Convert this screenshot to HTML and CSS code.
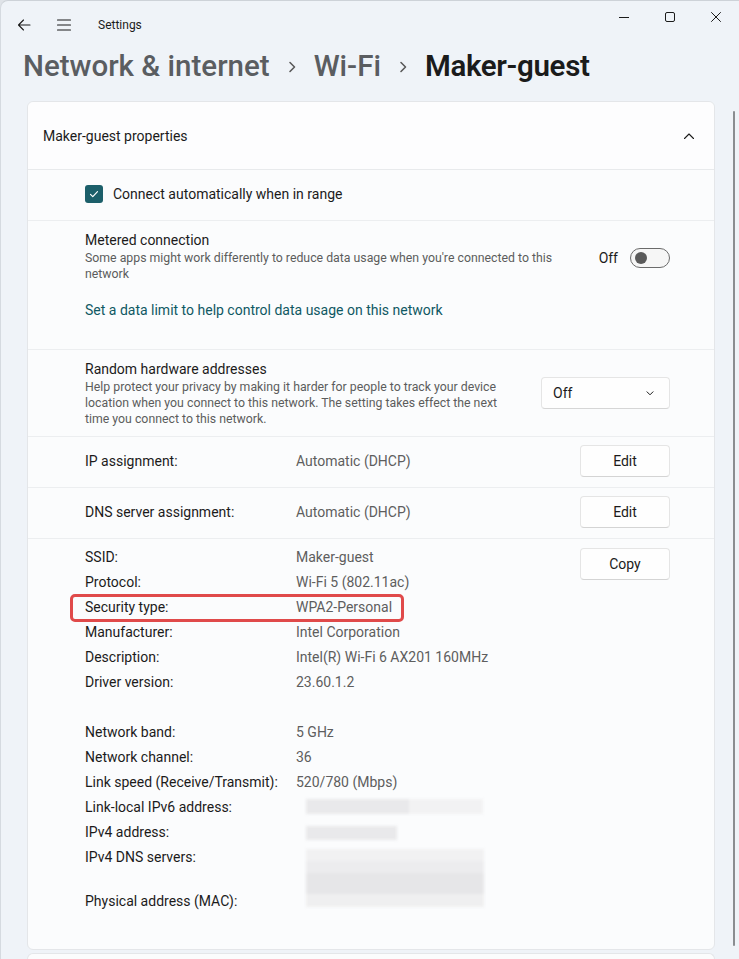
FILE: index.html
```html
<!DOCTYPE html>
<html>
<head>
<meta charset="utf-8">
<title>Settings</title>
<link rel="stylesheet" href="styles.css">
</head>
<body>
<div class="window">
  <header class="titlebar">
    <div class="tb-left">
      <span class="tb-icon"><svg width="16" height="16" viewBox="0 0 16 16"><path d="M14 8H2.5M7.5 3L2.5 8l5 5" fill="none" stroke="#1b1b1b" stroke-width="1.1" stroke-linecap="round" stroke-linejoin="round"/></svg></span>
      <span class="tb-icon"><svg width="16" height="16" viewBox="0 0 16 16"><path d="M1.5 3h13M1.5 8h13M1.5 13h13" fill="none" stroke="#1b1b1b" stroke-width="1.1" stroke-linecap="round"/></svg></span>
      <span class="app-title">Settings</span>
    </div>
    <div class="controls">
      <span class="ctl"><svg width="12" height="12" viewBox="0 0 12 12"><path d="M1 6.5h10" stroke="#1b1b1b" stroke-width="1"/></svg></span>
      <span class="ctl"><svg width="12" height="12" viewBox="0 0 12 12"><rect x="1.5" y="1.5" width="9" height="9" rx="1.5" fill="none" stroke="#1b1b1b" stroke-width="1"/></svg></span>
      <span class="ctl"><svg width="12" height="12" viewBox="0 0 12 12"><path d="M1.5 1.5l9 9M10.5 1.5l-9 9" stroke="#1b1b1b" stroke-width="1" stroke-linecap="round"/></svg></span>
    </div>
  </header>

  <h1 class="crumbs">
    <span class="crumb">Network &amp; internet</span>
    <svg class="sep" width="14" height="14" viewBox="0 0 14 14"><path d="M5 2.5l4.5 4.5L5 11.5" fill="none" stroke="#5a5a5a" stroke-width="1.6" stroke-linecap="round" stroke-linejoin="round"/></svg>
    <span class="crumb">Wi-Fi</span>
    <svg class="sep" width="14" height="14" viewBox="0 0 14 14"><path d="M5 2.5l4.5 4.5L5 11.5" fill="none" stroke="#5a5a5a" stroke-width="1.6" stroke-linecap="round" stroke-linejoin="round"/></svg>
    <span class="crumb current">Maker-guest</span>
  </h1>

  <main class="content">
    <section class="card">
      <div class="card-head">
        <span>Maker-guest properties</span>
        <svg width="14" height="14" viewBox="0 0 14 14"><path d="M2.5 9.5L7 5l4.5 4.5" fill="none" stroke="#1b1b1b" stroke-width="1.1" stroke-linecap="round" stroke-linejoin="round"/></svg>
      </div>

      <div class="row row-check">
        <span class="checkbox"><svg width="12" height="12" viewBox="0 0 12 12"><path d="M2.5 6.3l2.3 2.3 4.7-4.9" fill="none" stroke="#fff" stroke-width="1.2" stroke-linecap="round" stroke-linejoin="round"/></svg></span>
        <span>Connect automatically when in range</span>
      </div>

      <div class="row row-metered">
        <div class="setting">
          <div class="text">
            <div class="title">Metered connection</div>
            <div class="desc">Some apps might work differently to reduce data usage when you're connected to this network</div>
          </div>
          <div class="toggle-wrap">
            <span>Off</span>
            <span class="toggle"><span class="knob"></span></span>
          </div>
        </div>
        <a class="link">Set a data limit to help control data usage on this network</a>
      </div>

      <div class="row row-random">
        <div class="text">
          <div class="title">Random hardware addresses</div>
          <div class="desc narrow">Help protect your privacy by making it harder for people to track your device location when you connect to this network. The setting takes effect the next time you connect to this network.</div>
        </div>
        <div class="dropdown">
          <span>Off</span>
          <svg width="10" height="10" viewBox="0 0 10 10"><path d="M2 3.8L5 6.8l3-3" fill="none" stroke="#1b1b1b" stroke-width="1" stroke-linecap="round" stroke-linejoin="round"/></svg>
        </div>
      </div>

      <div class="row row-assign">
        <span class="label">IP assignment:</span>
        <span class="value">Automatic (DHCP)</span>
        <span class="btn">Edit</span>
      </div>

      <div class="row row-assign">
        <span class="label">DNS server assignment:</span>
        <span class="value">Automatic (DHCP)</span>
        <span class="btn">Edit</span>
      </div>

      <div class="row row-props">
        <div class="props">
          <div class="prop"><span class="label">SSID:</span><span class="value">Maker-guest</span></div>
          <div class="prop"><span class="label">Protocol:</span><span class="value">Wi-Fi 5 (802.11ac)</span></div>
          <div class="prop highlight"><span class="label">Security type:</span><span class="value">WPA2-Personal</span><span class="mark"></span></div>
          <div class="prop"><span class="label">Manufacturer:</span><span class="value">Intel Corporation</span></div>
          <div class="prop"><span class="label">Description:</span><span class="value">Intel(R) Wi-Fi 6 AX201 160MHz</span></div>
          <div class="prop"><span class="label">Driver version:</span><span class="value">23.60.1.2</span></div>
          <div class="prop"></div>
          <div class="prop"><span class="label">Network band:</span><span class="value">5 GHz</span></div>
          <div class="prop"><span class="label">Network channel:</span><span class="value">36</span></div>
          <div class="prop"><span class="label">Link speed (Receive/Transmit):</span><span class="value">520/780 (Mbps)</span></div>
          <div class="prop"><span class="label">Link-local IPv6 address:</span><span class="value"><span class="blur b-v6"></span></span></div>
          <div class="prop"><span class="label">IPv4 address:</span><span class="value"><span class="blur b-v4"></span></span></div>
          <div class="prop tall"><span class="label">IPv4 DNS servers:</span><span class="value"><span class="blur b-dns"></span></span></div>
          <div class="prop"><span class="label">Physical address (MAC):</span><span class="value"></span></div>
        </div>
        <span class="btn copy">Copy</span>
      </div>
    </section>
    <section class="card next"></section>
  </main>
  <div class="scrollbar"></div>
</div>
</body>
</html>
```

FILE: styles.css
```css
* { box-sizing: border-box; }
html, body { margin: 0; height: 100%; }
body {
  font-family: "Segoe UI", Roboto, "Noto Sans", sans-serif;
  color: #1b1b1b;
  background: #dfe3e8;
  overflow: hidden;
}
.window {
  position: relative;
  height: 959px;
  background: #eff3f8;
  border-top: 1px solid #cdd2d8;
  border-left: 1px solid #d5dae0;
  border-top-left-radius: 8px;
  overflow: hidden;
}
.titlebar {
  display: flex;
  justify-content: space-between;
  height: 47px;
}
.tb-left {
  display: flex;
  align-items: center;
  padding-left: 15px;
  gap: 24px;
}
.tb-icon { display: flex; width: 16px; height: 16px; }
.tb-icon + .app-title { margin-left: 2px; }
.app-title { font-size: 12px; margin-top: 1px; }
.controls { display: flex; height: 31px; }
.ctl {
  width: 46px;
  height: 31px;
  display: flex;
  align-items: center;
  justify-content: center;
}
.crumbs {
  margin: 0;
  padding-left: 22px;
  height: 36px;
  display: flex;
  align-items: center;
  gap: 15px;
  font-size: 29.5px;
  font-weight: 500;
  letter-spacing: 0;
  line-height: 36px;
}
.crumb { color: #5a5d61; }
.crumb.current { color: #1b1b1b; font-weight: 600; letter-spacing: -0.35px; }
.sep { margin: 2px 0 0; }
.content {
  padding: 17px 24px 0 26px;
  display: flex;
  flex-direction: column;
  gap: 3px;
}
.card {
  width: 688px;
  background: #fbfcfd;
  border: 1px solid #e4e6e9;
  border-radius: 6px;
  font-size: 14px;
}
.card-head {
  height: 68px;
  display: flex;
  align-items: center;
  justify-content: space-between;
  padding: 0 18px 0 15px;
  background: #fdfdfe;
  border-bottom: 1px solid #e8eaec;
  border-radius: 6px 6px 0 0;
}
.row {
  padding: 0 44px 0 57px;
  border-bottom: 1px solid #eceef0;
}
.row-check {
  height: 51px;
  display: flex;
  align-items: center;
  gap: 10px;
  padding-bottom: 2px;
}
.checkbox {
  width: 18px;
  height: 18px;
  border-radius: 3px;
  background: #1c5f6a;
  display: flex;
  align-items: center;
  justify-content: center;
}
.row-metered { height: 129px; padding-top: 10px; }
.setting { display: flex; justify-content: space-between; }
.text .title { line-height: 19px; }
.desc {
  font-size: 12.3px;
  color: #5c5c5c;
  line-height: 16px;
  max-width: 476px;
}
.desc.narrow { max-width: 428px; }
.toggle-wrap {
  display: flex;
  align-items: center;
  gap: 12px;
  margin-top: 16px;
  height: 22px;
}
.toggle {
  width: 40px;
  height: 20px;
  border: 1px solid #6b6b6b;
  border-radius: 10px;
  background: #f6f6f6;
  display: flex;
  align-items: center;
  padding-left: 4px;
}
.knob { width: 12px; height: 12px; border-radius: 50%; background: #5a5a5a; }
.link {
  display: block;
  margin-top: 18px;
  color: #0f5863;
  line-height: 20px;
}
.row-random {
  height: 87px;
  display: flex;
  justify-content: space-between;
  padding-top: 10px;
}
.dropdown {
  width: 129px;
  height: 32px;
  margin-top: 17px;
  background: #fefefe;
  border: 1px solid #e5e5e5;
  border-bottom-color: #d6d6d6;
  border-radius: 4px;
  display: flex;
  align-items: center;
  justify-content: space-between;
  padding: 0 14px 0 11px;
}
.row-assign {
  height: 51px;
  display: flex;
  align-items: center;
  padding-bottom: 2px;
}
.label { width: 211px; flex: none; }
.value { color: #5e5e5e; flex: 1; }
.btn {
  width: 90px;
  height: 32px;
  background: #fefefe;
  border: 1px solid #e5e5e5;
  border-bottom-color: #d4d4d4;
  border-radius: 4px;
  display: flex;
  align-items: center;
  justify-content: center;
  flex: none;
}
.row-props {
  border-bottom: none;
  display: flex;
  align-items: flex-start;
  padding-top: 6px;
  padding-bottom: 35px;
}
.props { flex: 1; }
.prop {
  position: relative;
  display: flex;
  height: 25px;
  line-height: 25px;
}
.prop.tall { height: 44px; }
.btn.copy { margin-top: 3px; }
.mark {
  position: absolute;
  left: -15px;
  top: -1px;
  width: 334px;
  height: 28px;
  border: 3px solid #e04a4a;
  border-radius: 5px;
}
.blur {
  display: block;
  position: relative;
  background: #e9e9eb;
  filter: blur(1.5px);
  margin-left: 10px;
}
.b-v6 { width: 177px; height: 15px; margin-top: 4px; background: linear-gradient(90deg, #e9e9eb 0 58%, #f2f2f3 58% 100%); }
.b-v4 { width: 91px; height: 14px; margin-top: 6px; }
.b-dns { width: 178px; height: 58px; margin-top: 4px; background: linear-gradient(180deg, #f1f1f2 0 20%, #ececee 20% 42%, #e6e6e8 42% 78%, #efeff0 78% 100%); }
.card.next {
  height: 30px;
  border-bottom: none;
}
.scrollbar {
  position: absolute;
  right: 4px;
  top: 110px;
  width: 2px;
  height: 835px;
  background: #8a8d91;
  border-radius: 1px;
}
```
